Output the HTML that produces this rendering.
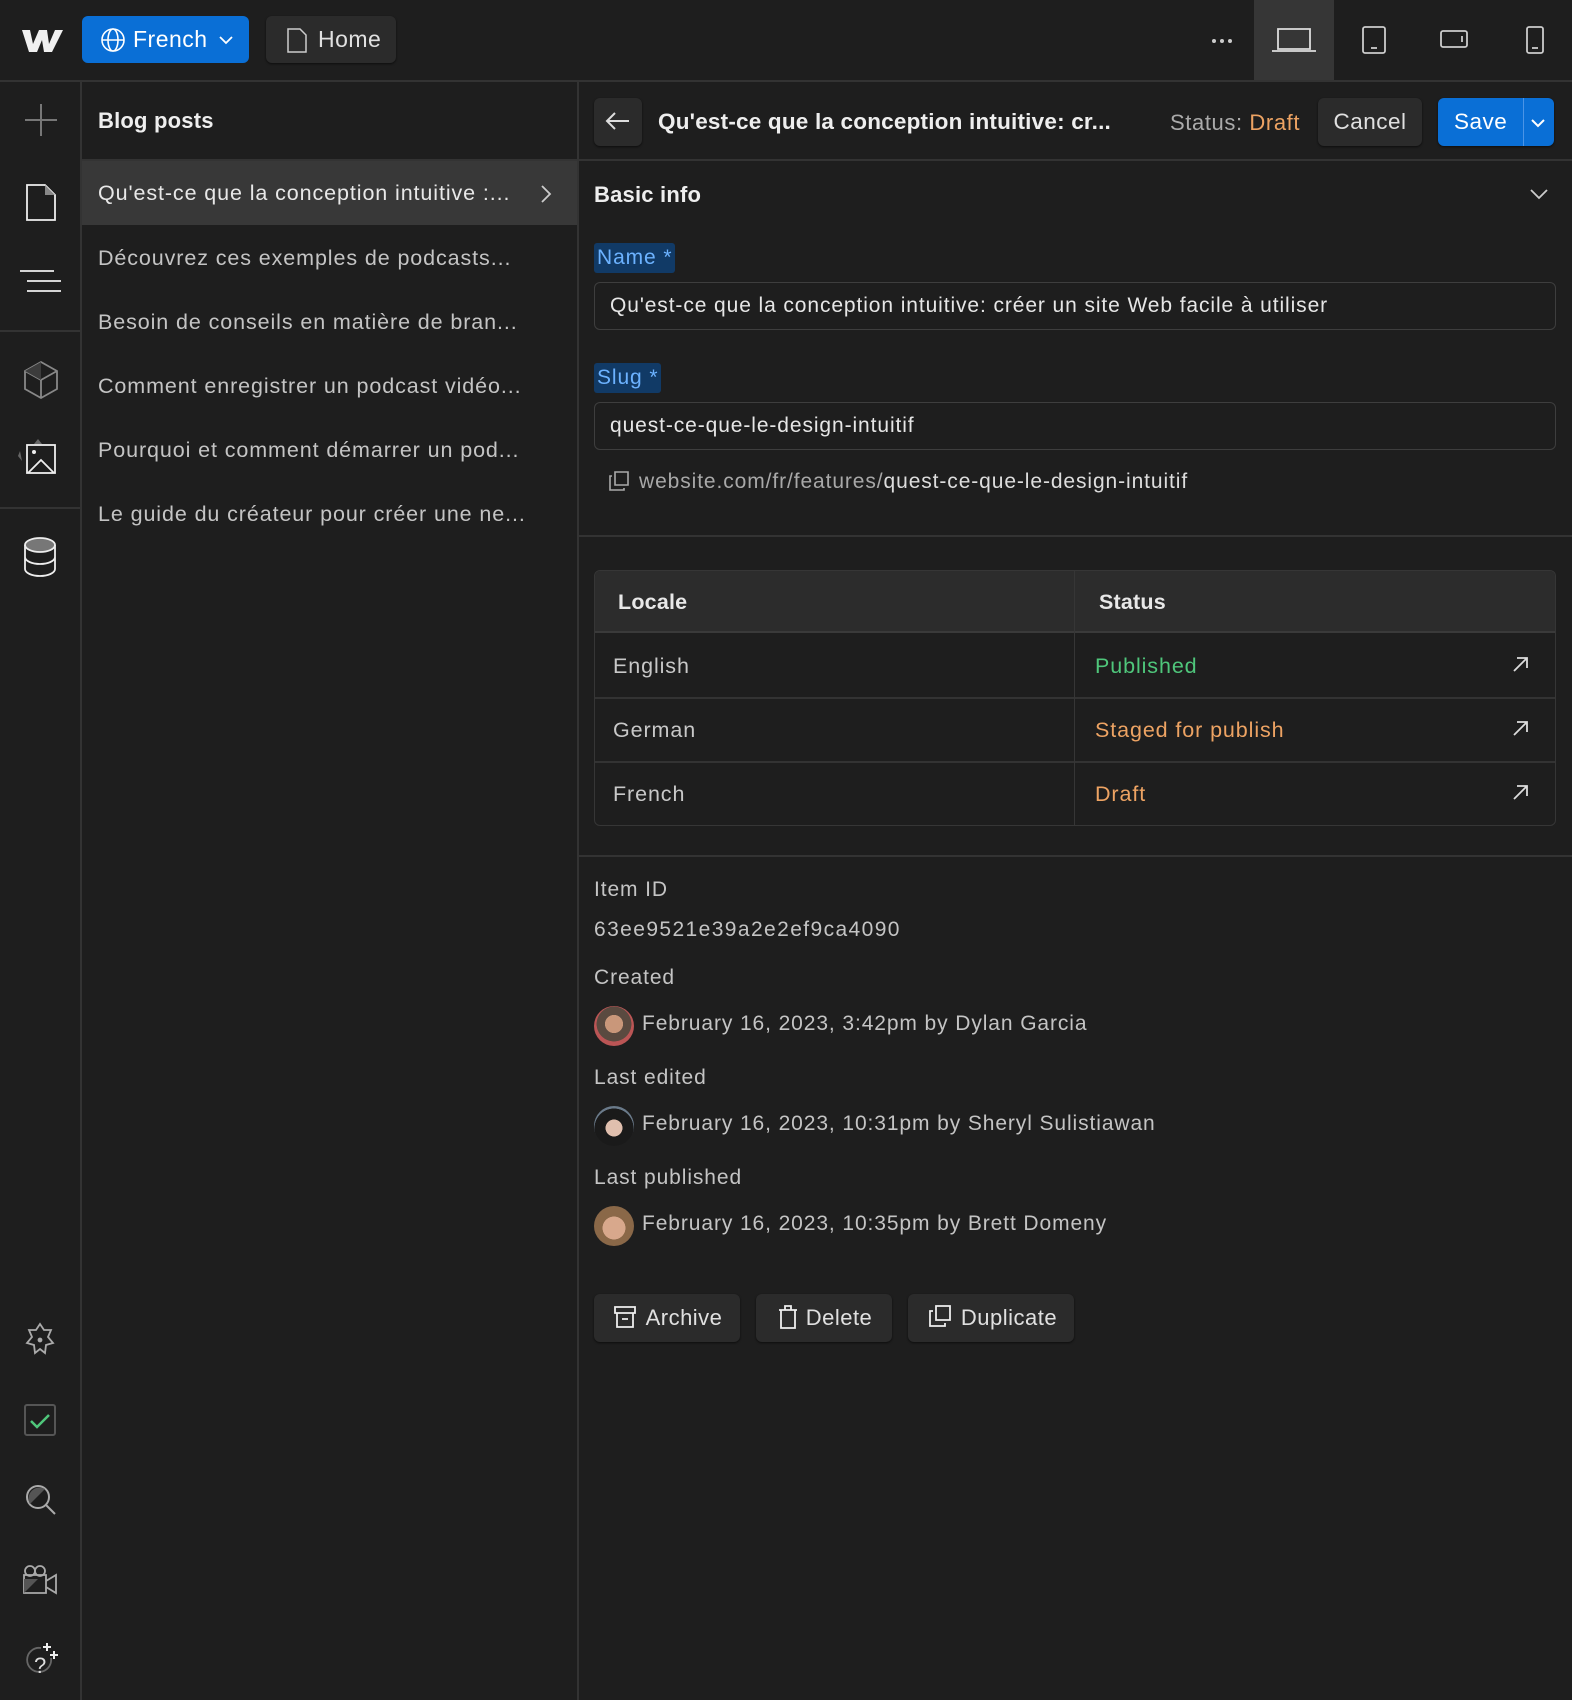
<!DOCTYPE html>
<html><head><meta charset="utf-8"><style>
*{box-sizing:border-box;margin:0;padding:0}
body{width:1572px;height:1700px;background:#1e1e1e;font-family:"Liberation Sans",sans-serif;color:#d9d9d9;position:relative;overflow:hidden;font-size:21px;letter-spacing:0.9px}
b,.bold{letter-spacing:0.2px}
.a{position:absolute}
.btn{position:absolute;background:#2b2b2b;border-radius:6px;box-shadow:0 1px 2px rgba(0,0,0,.6);display:flex;align-items:center;justify-content:center;color:#e0e0e0}
.hl{position:absolute;background:#363636}
svg{position:absolute;overflow:visible}
.li{position:absolute;left:98px;font-size:21.5px;color:#c4c4c4;white-space:nowrap}
.lbl{position:absolute;left:594px;color:#c4c4c4;font-size:21px;white-space:nowrap}
.inp{position:absolute;left:594px;width:962px;height:48px;border:1px solid #3e3e3e;border-radius:6px;background:#1e1e1e;padding-left:15px;display:flex;align-items:center;font-size:21px;color:#e6e6e6}
.chip{position:absolute;left:594px;background:#113a66;color:#6cb2ff;font-size:21px;padding:0 3px;height:30px;line-height:30px;border-radius:3px}
.av{position:absolute;left:594px;width:40px;height:40px;border-radius:50%}
</style></head><body>
<div class="hl" style="left:0;top:80px;width:1572px;height:2px;background:#333"></div>
<svg style="left:22px;top:28px" width="42" height="26" viewBox="0 0 42 26"><path d="M0 2h8l3 14 6-14h8l2 14 6-14h8L30 24h-8l-2-12-5 12H7z" fill="#f0f0f0"/></svg>
<div class="a" style="left:82px;top:16px;width:167px;height:47px;background:#0a6fd6;border-radius:6px"></div>
<svg style="left:101px;top:28px" width="24" height="24" viewBox="0 0 24 24" fill="none" stroke="#fff" stroke-width="1.6"><circle cx="12" cy="12" r="11"/><ellipse cx="12" cy="12" rx="5" ry="11"/><path d="M1 12h22"/></svg>
<div class="a" style="left:133px;top:26px;color:#fff;font-size:23px;letter-spacing:0.5px">French</div>
<svg style="left:219px;top:36px" width="14" height="8"><path d="M1 1l6 6 6-6" fill="none" stroke="#fff" stroke-width="1.8"/></svg>
<div class="btn" style="left:266px;top:16px;width:130px;height:47px"></div>
<svg style="left:287px;top:28px" width="20" height="25"><path d="M1 1h12l6 6v17H1z" fill="none" stroke="#ccc" stroke-width="1.5"/></svg>
<div class="a" style="left:318px;top:26px;color:#e0e0e0;font-size:23px;letter-spacing:0.5px">Home</div>
<svg style="left:1211px;top:38px" width="24" height="6"><circle cx="3" cy="3" r="2" fill="#ccc"/><circle cx="11" cy="3" r="2" fill="#ccc"/><circle cx="19" cy="3" r="2" fill="#ccc"/></svg>
<div class="hl" style="left:1254px;top:0;width:80px;height:80px;background:#363636"></div>
<svg style="left:1272px;top:28px" width="46" height="25" fill="none" stroke="#ddd" stroke-width="1.8"><path d="M6 1h32v20H6zM0 23h44"/></svg>
<svg style="left:1362px;top:26px" width="24" height="28" fill="none" stroke="#ccc" stroke-width="1.8"><rect x="1" y="1" width="22" height="26" rx="2"/><path d="M9 22h6"/></svg>
<svg style="left:1440px;top:30px" width="28" height="18" fill="none" stroke="#ccc" stroke-width="1.8"><rect x="1" y="1" width="26" height="16" rx="2"/><path d="M22 6v6"/></svg>
<svg style="left:1526px;top:26px" width="18" height="28" fill="none" stroke="#ccc" stroke-width="1.8"><rect x="1" y="1" width="16" height="26" rx="2"/><path d="M6 22h6"/></svg>

<div class="hl" style="left:80px;top:80px;width:2px;height:1620px;background:#333"></div>
<div class="hl" style="left:0;top:330px;width:80px;height:2px;background:#333"></div>
<div class="hl" style="left:0;top:507px;width:80px;height:2px;background:#333"></div>
<svg style="left:25px;top:104px" width="32" height="32" stroke="#777" stroke-width="2"><path d="M16 0v32M0 16h32"/></svg>
<svg style="left:26px;top:184px" width="30" height="37" fill="none" stroke="#eee" stroke-width="1.8"><path d="M1 1h18l10 10v25H1z"/><path d="M19 1v10h10z" fill="#888" stroke="none"/></svg>
<svg style="left:20px;top:270px" width="40" height="22" stroke="#eee" stroke-width="1.8"><path d="M0 1h34M7 11h34M7 21h34"/></svg>
<svg style="left:23px;top:361px" width="36" height="38" fill="none" stroke="#888" stroke-width="1.8"><path d="M18 1l16 9v18l-16 9-16-9V10z M2 10l16 9 16-9 M18 19v18"/><path d="M18 1l-16 9 16 9z" fill="#3c3c3c" stroke="none"/></svg>
<svg style="left:18px;top:438px" width="40" height="40"><path d="M20 1l-4 5h8z M2 13l-2 5 4 5z" fill="#666"/><rect x="9" y="7" width="28" height="28" fill="none" stroke="#eee" stroke-width="1.8"/><circle cx="16" cy="14" r="2" fill="#eee"/><path d="M10 35l13-13 13 13" fill="none" stroke="#eee" stroke-width="1.8"/></svg>
<svg style="left:23px;top:537px" width="34" height="40" fill="none" stroke="#eee" stroke-width="1.8"><ellipse cx="17" cy="8" rx="15" ry="7" fill="#777"/><path d="M2 8v24c0 4 7 7 15 7s15-3 15-7V8M2 20c0 4 7 7 15 7s15-3 15-7"/></svg>
<svg style="left:24px;top:1323px" width="32" height="34" fill="none" stroke="#aaa" stroke-width="1.8"><path d="M16 1l4 6 7 0-3 7 5 6-7 2-1 8-5-4-5 4-1-8-7-2 5-6-3-7 7 0z"/><circle cx="16" cy="17" r="1.5" fill="#aaa"/></svg>
<svg style="left:24px;top:1404px" width="32" height="32"><rect x="1" y="1" width="30" height="30" rx="2" fill="none" stroke="#555" stroke-width="2"/><path d="M7 17l6 6 12-12" fill="none" stroke="#4fc67b" stroke-width="2.5"/></svg>
<svg style="left:25px;top:1484px" width="32" height="32" fill="none" stroke="#aaa" stroke-width="2"><circle cx="13" cy="13" r="11"/><path d="M21 21l9 9"/><path d="M5 20L20 5A11 11 0 0 0 5 20z" fill="#555" stroke="none"/></svg>
<svg style="left:22px;top:1565px" width="36" height="30" fill="none" stroke="#aaa" stroke-width="1.8"><path d="M2 10h22v18H2z M24 16l10-6v18l-10-6"/><circle cx="8" cy="6" r="5"/><circle cx="18" cy="6" r="5"/><path d="M2 28l14-14H2z" fill="#555" stroke="none"/></svg>
<svg style="left:23px;top:1640px" width="38" height="38"><path d="M28 18A12 12 0 1 1 18 8" fill="none" stroke="#666" stroke-width="1.8"/><text x="11" y="33" font-size="22" fill="#ddd" font-family="Liberation Sans">?</text><path d="M24 3v8M20 7h8M31 11v8M27 15h8" stroke="#eee" stroke-width="2"/></svg>

<div class="hl" style="left:577px;top:80px;width:2px;height:1620px;background:#333"></div>
<div class="hl" style="left:82px;top:159px;width:495px;height:2px;background:#333"></div>
<div class="a bold" style="left:98px;top:108px;font-size:22px;font-weight:bold;color:#eee">Blog posts</div>
<div class="hl" style="left:82px;top:161px;width:495px;height:64px;background:#383838"></div>
<div class="li" style="top:181px;color:#e8e8e8">Qu'est-ce que la conception intuitive :...</div>
<svg style="left:541px;top:185px" width="10" height="18"><path d="M1 1l8 8-8 8" fill="none" stroke="#ccc" stroke-width="1.8"/></svg>
<div class="li" style="top:246px">Découvrez ces exemples de podcasts...</div>
<div class="li" style="top:310px">Besoin de conseils en matière de bran...</div>
<div class="li" style="top:374px">Comment enregistrer un podcast vidéo...</div>
<div class="li" style="top:438px">Pourquoi et comment démarrer un pod...</div>
<div class="li" style="top:502px">Le guide du créateur pour créer une ne...</div>

<div class="hl" style="left:579px;top:159px;width:993px;height:2px;background:#333"></div>
<div class="btn" style="left:594px;top:98px;width:48px;height:48px"></div>
<svg style="left:606px;top:112px" width="24" height="18" fill="none" stroke="#ddd" stroke-width="2"><path d="M23 9H2M9 1L1 9l8 8"/></svg>
<div class="a bold" style="left:658px;top:109px;font-size:22.5px;font-weight:bold;color:#eee;white-space:nowrap">Qu'est-ce que la conception intuitive: cr...</div>
<div class="a" style="left:1170px;top:110px;font-size:22px;color:#aaa;letter-spacing:0.6px">Status: <span style="color:#eda363">Draft</span></div>
<div class="btn" style="left:1318px;top:98px;width:104px;height:48px;font-size:22.5px;letter-spacing:0.5px">Cancel</div>
<div class="a" style="left:1438px;top:98px;width:116px;height:48px;background:#0a6fd6;border-radius:6px;box-shadow:0 1px 2px rgba(0,0,0,.6)"></div>
<div class="a" style="left:1523px;top:98px;width:1px;height:48px;background:#4b94e6"></div>
<div class="a" style="left:1454px;top:109px;font-size:22.5px;color:#fff;letter-spacing:0.5px">Save</div>
<svg style="left:1531px;top:119px" width="14" height="8"><path d="M1 1l6 6 6-6" fill="none" stroke="#fff" stroke-width="2"/></svg>

<div class="a bold" style="left:594px;top:182px;font-size:22px;font-weight:bold;color:#eee">Basic info</div>
<svg style="left:1530px;top:189px" width="18" height="10"><path d="M1 1l8 8 8-8" fill="none" stroke="#ccc" stroke-width="1.8"/></svg>
<div class="chip" style="top:243px">Name *</div>
<div class="inp" style="top:282px">Qu'est-ce que la conception intuitive: créer un site Web facile à utiliser</div>
<div class="chip" style="top:363px">Slug *</div>
<div class="inp" style="top:402px">quest-ce-que-le-design-intuitif</div>
<svg style="left:609px;top:471px" width="20" height="20" fill="none" stroke="#aaa" stroke-width="1.6"><path d="M6 1h13v13H6z M3 5H1v14h14v-2"/></svg>
<div class="a" style="left:639px;top:470px;font-size:21px;color:#a8a8a8;white-space:nowrap">website.com/fr/features/<span style="color:#ddd">quest-ce-que-le-design-intuitif</span></div>
<div class="hl" style="left:579px;top:535px;width:993px;height:2px;background:#333"></div>

<div class="a" style="left:594px;top:570px;width:962px;height:256px;border:1px solid #363636;border-radius:6px;overflow:hidden">
<div class="a" style="left:0;top:0;width:962px;height:62px;background:#2c2c2c;border-bottom:2px solid #3a3a3a"></div>
<div class="a" style="left:0;top:126px;width:962px;height:2px;background:#333"></div>
<div class="a" style="left:0;top:190px;width:962px;height:2px;background:#333"></div>
<div class="a" style="left:479px;top:0;width:1px;height:256px;background:#363636"></div>
<div class="a bold" style="left:23px;top:19px;font-weight:bold;font-size:21.5px;color:#e8e8e8">Locale</div>
<div class="a bold" style="left:504px;top:19px;font-weight:bold;font-size:21.5px;color:#e8e8e8">Status</div>
<div class="a" style="left:18px;top:83px;font-size:21.5px;color:#c8c8c8">English</div>
<div class="a" style="left:18px;top:147px;font-size:21.5px;color:#c8c8c8">German</div>
<div class="a" style="left:18px;top:211px;font-size:21.5px;color:#c8c8c8">French</div>
<div class="a" style="left:500px;top:83px;font-size:21.5px;color:#4fc67b">Published</div>
<div class="a" style="left:500px;top:147px;font-size:21.5px;color:#eda363">Staged for publish</div>
<div class="a" style="left:500px;top:211px;font-size:21.5px;color:#eda363">Draft</div>
<svg style="left:918px;top:86px" width="15" height="15" fill="none" stroke="#ddd" stroke-width="1.8"><path d="M1 14L14 1M4 1h10v10"/></svg>
<svg style="left:918px;top:150px" width="15" height="15" fill="none" stroke="#ddd" stroke-width="1.8"><path d="M1 14L14 1M4 1h10v10"/></svg>
<svg style="left:918px;top:214px" width="15" height="15" fill="none" stroke="#ddd" stroke-width="1.8"><path d="M1 14L14 1M4 1h10v10"/></svg>
</div>
<div class="hl" style="left:579px;top:855px;width:993px;height:2px;background:#333"></div>

<div class="lbl" style="top:878px">Item ID</div>
<div class="lbl" style="top:918px;letter-spacing:1.4px">63ee9521e39a2e2ef9ca4090</div>
<div class="lbl" style="top:966px">Created</div>
<div class="av" style="top:1006px;background:radial-gradient(circle at 50% 45%,#c9977a 0 30%,#5a4a40 31% 58%,#b55 59% 75%,#888 76%)"></div>
<div class="lbl" style="left:642px;top:1012px">February 16, 2023, 3:42pm by Dylan Garcia</div>
<div class="lbl" style="top:1066px">Last edited</div>
<div class="av" style="top:1106px;background:radial-gradient(circle at 50% 55%,#e0bfae 0 28%,#1a1a1a 29% 65%,#6a7a8a 66%)"></div>
<div class="lbl" style="left:642px;top:1112px">February 16, 2023, 10:31pm by Sheryl Sulistiawan</div>
<div class="lbl" style="top:1166px">Last published</div>
<div class="av" style="top:1206px;background:radial-gradient(circle at 50% 55%,#d8a88c 0 38%,#8a6848 39%)"></div>
<div class="lbl" style="left:642px;top:1212px">February 16, 2023, 10:35pm by Brett Domeny</div>

<div class="btn" style="left:594px;top:1294px;width:146px;height:48px;font-size:22px"><span style="margin-left:34px;letter-spacing:0.5px">Archive</span></div>
<svg style="left:614px;top:1306px" width="22" height="22" fill="none" stroke="#eee" stroke-width="1.8"><path d="M1 1h20v6H1z M3 7v14h16V7 M8 13h6"/></svg>
<div class="btn" style="left:756px;top:1294px;width:136px;height:48px;font-size:22px"><span style="margin-left:30px;letter-spacing:0.5px">Delete</span></div>
<svg style="left:778px;top:1305px" width="20" height="24" fill="none" stroke="#eee" stroke-width="1.8"><path d="M1 5h18 M7 5V1h6v4 M3 5v18h14V5"/></svg>
<div class="btn" style="left:908px;top:1294px;width:166px;height:48px;font-size:22px"><span style="margin-left:36px;letter-spacing:0.5px">Duplicate</span></div>
<svg style="left:929px;top:1305px" width="22" height="22" fill="none" stroke="#eee" stroke-width="1.8"><path d="M7 1h14v14H7z M4 6H1v15h15v-3"/></svg>
</body></html>
